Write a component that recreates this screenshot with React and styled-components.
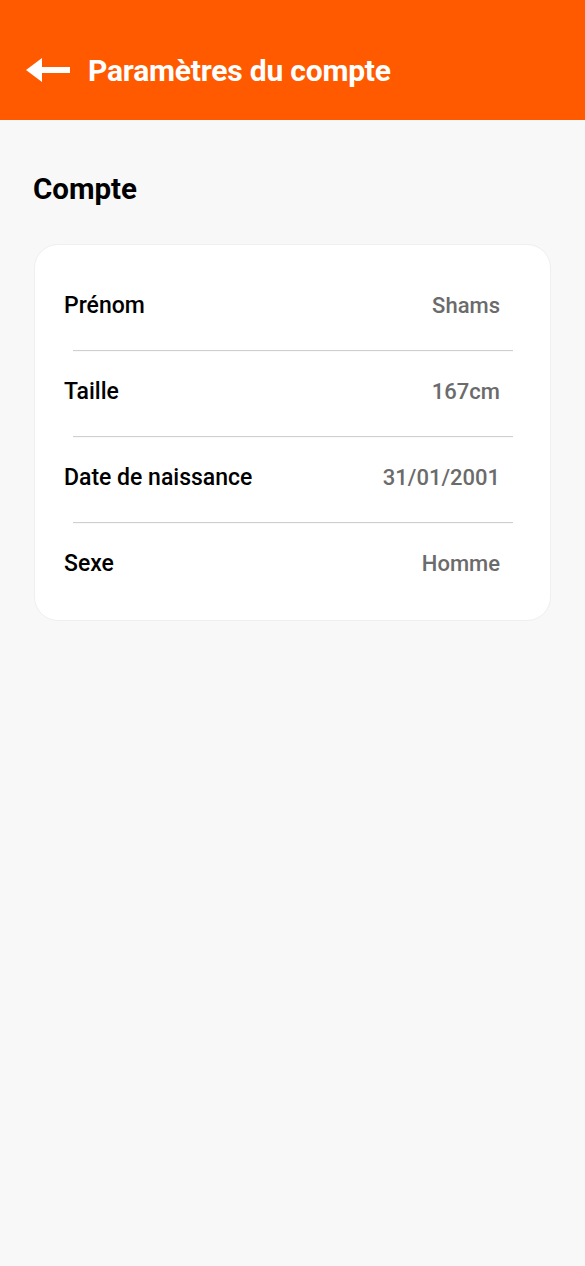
import React from "react";
import styled, { createGlobalStyle } from "styled-components";

const Global = createGlobalStyle`
  html, body { margin: 0; padding: 0; background: #f8f8f8; }
  body { font-family: Roboto, "Liberation Sans", sans-serif; }
  * { box-sizing: border-box; }
`;

const Page = styled.div`
  min-height: 1266px;
  background: #f8f8f8;
`;

const Header = styled.header`
  height: 120px;
  background: #ff5a00;
  display: flex;
  align-items: center;
  padding: 20px 0 0 26px;
  gap: 18px;
`;

const BackButton = styled.button`
  border: 0;
  background: none;
  padding: 0;
  display: flex;
  width: 44px;
  height: 26px;
  cursor: pointer;
`;

const Title = styled.h1`
  margin: 0;
  color: #fff;
  font-size: 30px;
  font-weight: 700;
  letter-spacing: -0.2px;
`;

const Content = styled.main`
  padding: 54px 34px 0 34px;
`;

const SectionTitle = styled.h2`
  margin: 0 0 40px -1px;
  font-size: 29.5px;
  font-weight: 700;
  color: #000;
  line-height: 30px;
`;

const Card = styled.section`
  background: #fff;
  border: 1px solid #efefef;
  border-radius: 24px;
  padding: 34px 50px 31px 29px;
`;

const Row = styled.div`
  display: flex;
  justify-content: space-between;
  align-items: center;
  height: 52px;
`;

const Divider = styled.div`
  height: 1px;
  margin: 19px -13px 14px 9px;
  background: #cfcfcf;
  box-shadow: 0 0.5px 0.5px rgba(0,0,0,0.05);
`;

const Label = styled.span`
  font-size: 23px;
  font-weight: 500;
  color: #000;
`;

const Value = styled.span`
  font-size: 22px;
  font-weight: 500;
  color: #6b6b6b;
`;

const rows = [
  ["Prénom", "Shams"],
  ["Taille", "167cm"],
  ["Date de naissance", "31/01/2001"],
  ["Sexe", "Homme"],
];

export default function App() {
  return (
    <Page>
      <Global />
      <Header>
        <BackButton aria-label="Retour">
          <svg width="44" height="26" viewBox="0 0 44 26">
            <polygon points="0,13 16,1 16,10 44,10 44,16 16,16 16,25" fill="#fff" />
          </svg>
        </BackButton>
        <Title>Paramètres du compte</Title>
      </Header>
      <Content>
        <SectionTitle>Compte</SectionTitle>
        <Card>
          {rows.map(([l, v], i) => (
            <React.Fragment key={l}>
              {i > 0 && <Divider />}
              <Row>
                <Label>{l}</Label>
                <Value>{v}</Value>
              </Row>
            </React.Fragment>
          ))}
        </Card>
      </Content>
    </Page>
  );
}
